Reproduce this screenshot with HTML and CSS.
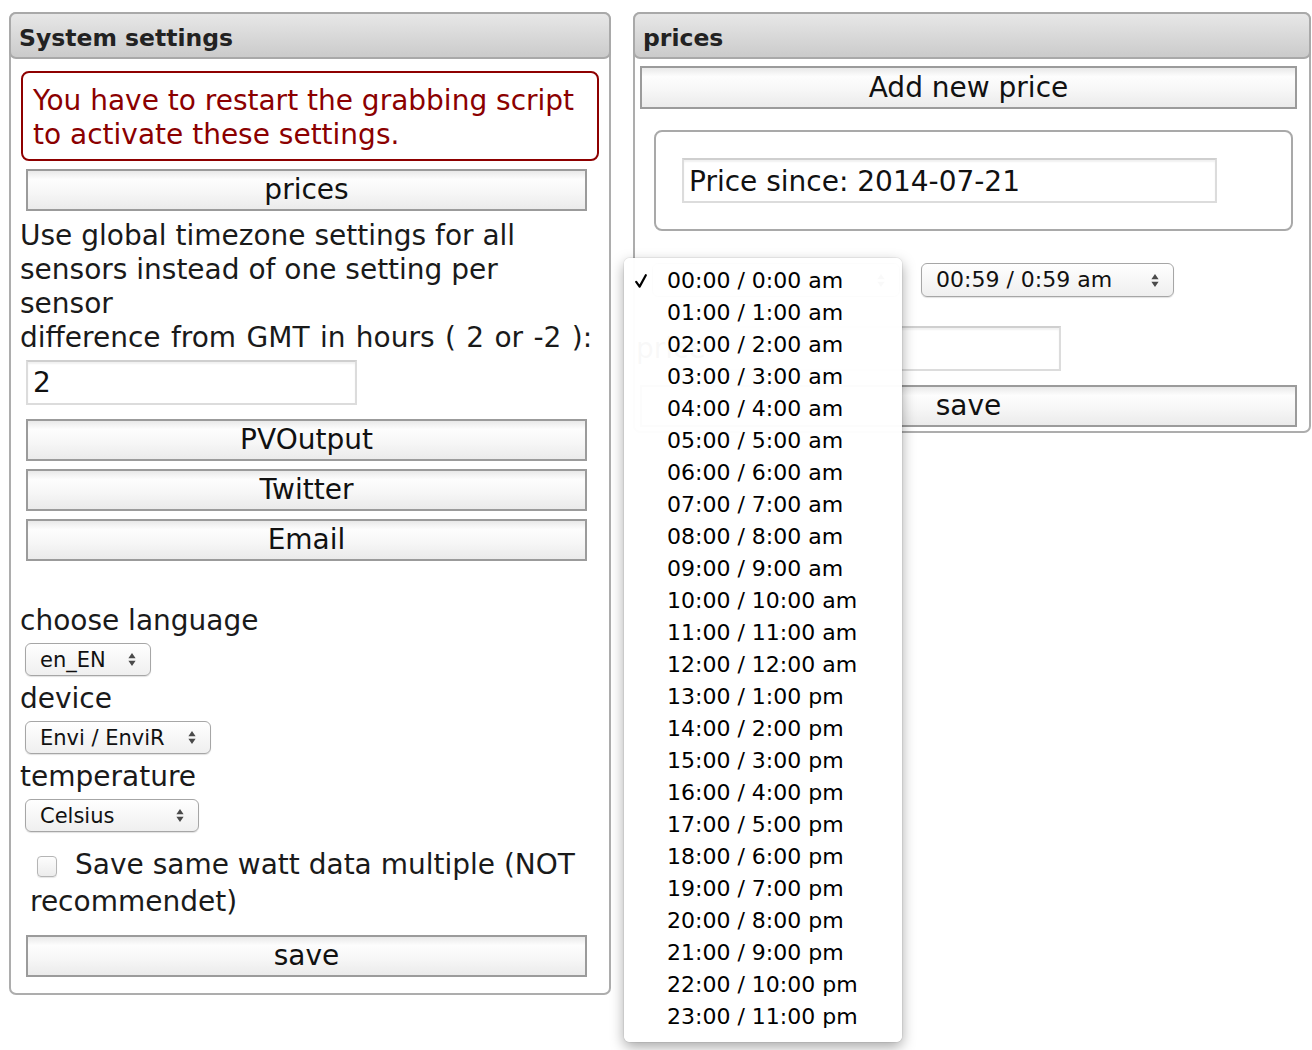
FILE: index.html
```html
<!DOCTYPE html>
<html lang="en">
<head>
<meta charset="utf-8">
<title>System settings</title>
<link rel="stylesheet" href="styles.css">
</head>
<body>
<div class="page">
  <section class="panel panel-system">
    <h2 class="panel-head">System settings</h2>
    <div class="panel-body">
      <div class="alert">You have to restart the grabbing script to activate these settings.</div>
      <button class="btn btn-left">prices</button>
      <p class="desc">Use global timezone settings for all sensors instead of one setting per sensor<br><span class="desc-gmt">difference from GMT in hours ( 2 or -2 ):</span></p>
      <input class="field field-gmt" type="text" value="2">
      <div class="btn-stack">
        <button class="btn btn-left">PVOutput</button>
        <button class="btn btn-left">Twitter</button>
        <button class="btn btn-left">Email</button>
      </div>
      <div class="options">
        <div class="label">choose language</div>
        <div class="sel sel-lang"><span>en_EN</span><svg class="arr" width="8" height="15" viewBox="0 0 8 15"><path d="M4 1L7.6 6.3H0.4Z M4 14L7.6 8.7H0.4Z" fill="#4a4a4a"/></svg></div>
        <div class="label">device</div>
        <div class="sel sel-device"><span>Envi / EnviR</span><svg class="arr" width="8" height="15" viewBox="0 0 8 15"><path d="M4 1L7.6 6.3H0.4Z M4 14L7.6 8.7H0.4Z" fill="#4a4a4a"/></svg></div>
        <div class="label">temperature</div>
        <div class="sel sel-temp"><span>Celsius</span><svg class="arr" width="8" height="15" viewBox="0 0 8 15"><path d="M4 1L7.6 6.3H0.4Z M4 14L7.6 8.7H0.4Z" fill="#4a4a4a"/></svg></div>
      </div>
      <p class="check-line"><input class="check" type="checkbox">Save same watt data multiple (NOT recommendet)</p>
      <button class="btn btn-left">save</button>
    </div>
  </section>

  <section class="panel panel-prices">
    <h2 class="panel-head">prices</h2>
    <div class="panel-body-right">
      <button class="btn btn-wide">Add new price</button>
      <fieldset class="box">
        <input class="field field-since" type="text" value="Price since: 2014-07-21">
      </fieldset>
      <div class="time-row">
        <div class="sel sel-time sel-time-from"><span>00:00 / 0:00 am</span><svg class="arr" width="8" height="15" viewBox="0 0 8 15"><path d="M4 1L7.6 6.3H0.4Z M4 14L7.6 8.7H0.4Z" fill="#4a4a4a"/></svg></div>
        <div class="sel sel-time"><span>00:59 / 0:59 am</span><svg class="arr" width="8" height="15" viewBox="0 0 8 15"><path d="M4 1L7.6 6.3H0.4Z M4 14L7.6 8.7H0.4Z" fill="#4a4a4a"/></svg></div>
      </div>
      <div class="price-row">
        <span class="price-label">price</span>
        <input class="field field-price" type="text" value="">
      </div>
      <button class="btn btn-wide btn-save">save</button>
    </div>
  </section>
</div>

<ul class="menu">
  <li class="item"><span class="tick"><svg width="12" height="14" viewBox="0 0 12 14"><path d="M1.2 7.8L4.6 12.6L10.8 1.2" fill="none" stroke="#000" stroke-width="2.2" stroke-linecap="round" stroke-linejoin="round"/></svg></span>00:00 / 0:00 am</li>
  <li class="item"><span class="tick"></span>01:00 / 1:00 am</li>
  <li class="item"><span class="tick"></span>02:00 / 2:00 am</li>
  <li class="item"><span class="tick"></span>03:00 / 3:00 am</li>
  <li class="item"><span class="tick"></span>04:00 / 4:00 am</li>
  <li class="item"><span class="tick"></span>05:00 / 5:00 am</li>
  <li class="item"><span class="tick"></span>06:00 / 6:00 am</li>
  <li class="item"><span class="tick"></span>07:00 / 7:00 am</li>
  <li class="item"><span class="tick"></span>08:00 / 8:00 am</li>
  <li class="item"><span class="tick"></span>09:00 / 9:00 am</li>
  <li class="item"><span class="tick"></span>10:00 / 10:00 am</li>
  <li class="item"><span class="tick"></span>11:00 / 11:00 am</li>
  <li class="item"><span class="tick"></span>12:00 / 12:00 am</li>
  <li class="item"><span class="tick"></span>13:00 / 1:00 pm</li>
  <li class="item"><span class="tick"></span>14:00 / 2:00 pm</li>
  <li class="item"><span class="tick"></span>15:00 / 3:00 pm</li>
  <li class="item"><span class="tick"></span>16:00 / 4:00 pm</li>
  <li class="item"><span class="tick"></span>17:00 / 5:00 pm</li>
  <li class="item"><span class="tick"></span>18:00 / 6:00 pm</li>
  <li class="item"><span class="tick"></span>19:00 / 7:00 pm</li>
  <li class="item"><span class="tick"></span>20:00 / 8:00 pm</li>
  <li class="item"><span class="tick"></span>21:00 / 9:00 pm</li>
  <li class="item"><span class="tick"></span>22:00 / 10:00 pm</li>
  <li class="item"><span class="tick"></span>23:00 / 11:00 pm</li>
</ul>
</body>
</html>
```
FILE: styles.css
```css
* { box-sizing: border-box; }

html, body {
  margin: 0;
  padding: 0;
  background: #fff;
  overflow: hidden;
}

body {
  font-family: "DejaVu Sans", Verdana, sans-serif;
  font-size: 28px;
  line-height: 34px;
  color: #1a1a1a;
  width: 1312px;
  height: 1050px;
}

.page {
  display: flex;
  align-items: flex-start;
  gap: 22px;
  padding: 12px 0 0 9px;
}

.panel {
  border: 2px solid #adadad;
  border-radius: 7px;
  background: #fff;
}

.panel-system { width: 602px; }
.panel-prices { width: 678px; }

.panel-head {
  margin: -2px -2px 0;
  height: 47px;
  padding: 3px 8px 0;
  border: 2px solid #a9a9a9;
  border-radius: 7px;
  background: linear-gradient(#e7e7e7, #cbcbcb);
  font-size: 23.5px;
  font-weight: bold;
  line-height: 42px;
  color: #222;
}

.panel-body {
  padding: 12px 13px 16px 9px;
  display: flex;
  flex-direction: column;
  align-items: flex-start;
}

.alert {
  margin-left: 1px;
  width: 578px;
  height: 90px;
  padding: 11px 10px 7px;
  border: 2px solid #8e0000;
  border-radius: 8px;
  color: #8b0000;
}

.btn {
  font-family: "DejaVu Sans", Verdana, sans-serif;
  font-size: 28px;
  line-height: 34px;
  color: #111;
  height: 42px;
  padding: 0;
  border: 2px solid #9b9b9b;
  border-radius: 0;
  background: linear-gradient(#e9e9e9 0%, #fdfdfd 22%, #f7f7f7 55%, #ebebeb 100%);
  text-align: center;
}

.btn-left {
  width: 561px;
  margin-left: 6px;
  margin-top: 8px;
}

.desc {
  margin: 8px 0 0;
  width: 576px;
}

.desc-gmt {
  white-space: nowrap;
  word-spacing: 1.5px;
}

.field {
  font-family: "DejaVu Sans", Verdana, sans-serif;
  font-size: 28px;
  color: #111;
  height: 45px;
  padding: 0 5px;
  border: 2px solid #dcdcdc;
  border-top-color: #cfcfcf;
  box-shadow: inset 0 2px 2px rgba(0, 0, 0, 0.06);
  background: #fff;
  outline: none;
}

.field-gmt {
  width: 331px;
  margin: 5px 0 0 6px;
}

.btn-stack {
  display: flex;
  flex-direction: column;
  margin-top: 6px;
}

.options {
  margin-top: 43px;
  display: flex;
  flex-direction: column;
  align-items: flex-start;
}

.label {
  height: 34px;
}

.sel {
  display: flex;
  align-items: center;
  justify-content: space-between;
  height: 33px;
  margin: 5px 0 6px 5px;
  padding: 0 14px 0 14px;
  border: 1px solid #a6a6a6;
  border-radius: 6px;
  background: linear-gradient(#ffffff, #efefef);
  box-shadow: 0 1px 1px rgba(0, 0, 0, 0.12);
  font-size: 21px;
  line-height: 24px;
  color: #111;
}

.sel-lang { width: 126px; }
.sel-device { width: 186px; }
.sel-temp { width: 174px; }

.arr { flex: none; }

.check-line {
  margin: 8px 0 0;
  padding-left: 10px;
  width: 586px;
  line-height: 37px;
}

.check {
  appearance: none;
  -webkit-appearance: none;
  display: inline-block;
  width: 20px;
  height: 21px;
  margin: 0 18px 0 7px;
  vertical-align: -3px;
  border: 1px solid #b5b5b5;
  border-radius: 4px;
  background: linear-gradient(#fdfdfd, #ececec);
  box-shadow: 0 1px 1px rgba(0, 0, 0, 0.1);
}

.check-line + .btn-left {
  margin-top: 15px;
}

/* right panel */
.panel-body-right {
  padding: 0 0 4px 5px;
  display: flex;
  flex-direction: column;
  align-items: flex-start;
}

.btn-wide {
  width: 657px;
  height: 43px;
  margin-top: 7px;
}

.box {
  margin: 21px 0 0 14px;
  width: 639px;
  height: 101px;
  padding: 26px;
  border: 2px solid #a9a9a9;
  border-radius: 8px;
  min-width: 0;
}

.field-since {
  display: block;
  width: 535px;
  padding-top: 2px;
}

.time-row {
  display: flex;
  gap: 21px;
  margin: 32px 0 0 12px;
}

.sel-time {
  margin: 0;
  height: 34px;
  width: 253px;
  font-size: 22px;
}

.sel-time-from { width: 248px; }

.price-row {
  display: flex;
  align-items: center;
  gap: 14px;
  margin: 29px 0 0 -4px;
}

.price-label {
  color: #222;
}

.field-price {
  width: 341px;
}

.btn-save {
  margin-top: 14px;
  height: 42px;
}

/* open select popup */
.menu {
  position: absolute;
  left: 624px;
  top: 258px;
  width: 278px;
  margin: 0;
  padding: 7px 0 9px;
  list-style: none;
  background: rgba(255, 255, 255, 0.97);
  border-radius: 6px;
  box-shadow: 0 0 0 1px rgba(0, 0, 0, 0.05), 0 5px 14px rgba(0, 0, 0, 0.35);
  font-size: 22px;
  line-height: 32px;
  color: #000;
}

.item {
  display: flex;
  height: 32px;
  white-space: nowrap;
}

.tick {
  flex: none;
  display: flex;
  align-items: center;
  width: 43px;
  padding-left: 11px;
}
```
